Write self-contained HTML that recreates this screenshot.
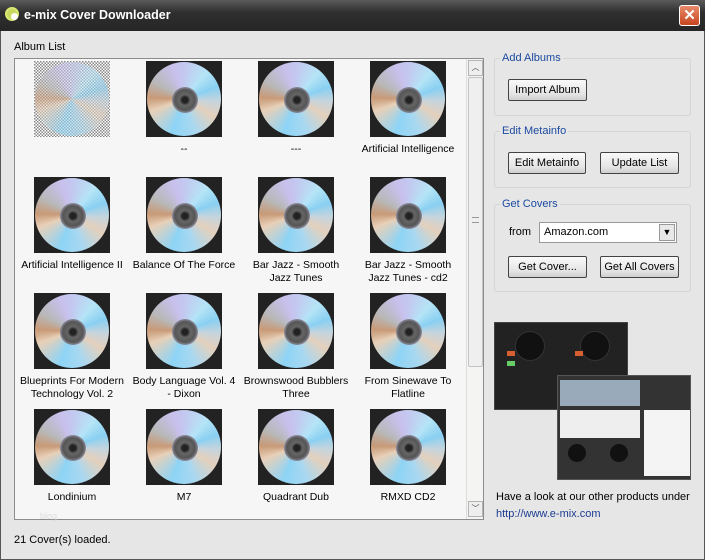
<!DOCTYPE html>
<html><head><style>
*{margin:0;padding:0;box-sizing:border-box}
body{width:705px;height:560px;overflow:hidden;background:#e6e6e6;font-family:Tahoma,"Liberation Sans",sans-serif;font-size:11px;color:#000;position:relative}
.title{position:absolute;left:0;top:0;width:705px;height:31px;background:linear-gradient(#5a5a5a,#2f2f2f 40%,#262626);color:#fff;font-weight:bold;font-size:12.5px}
.title span{position:absolute;left:24px;top:8px}
.logo{position:absolute;left:5px;top:7px;width:14px;height:14px;border-radius:50%;background:#c8d860;border:2px solid #d8e870}
.logo:after{content:"";position:absolute;left:4px;top:4px;width:7px;height:7px;border-radius:50%;background:#fff}
.close{position:absolute;left:679px;top:5px;width:21px;height:21px;background:linear-gradient(#e88a6a,#c8451f);border:1px solid #fff;border-radius:3px;color:#fff;font-size:15px;text-align:center;line-height:19px;font-weight:bold}
.frame{position:absolute;left:0;top:31px;width:705px;height:529px;border:1px solid #555;border-top:none}
.abs{position:absolute}
.list{position:absolute;left:14px;top:58px;width:470px;height:462px;background:#f6f6f6;border:1px solid #8c8c8c}
.sb{position:absolute;right:0;top:0;width:17px;height:460px;background:#f4f4f2;border-left:1px solid #ddd}
.sbb{position:absolute;left:1px;width:15px;height:16px;border:1px solid #b5b5b5;background:#eee;font-size:8px;text-align:center;line-height:14px;color:#444}
.thumb{position:absolute;left:1px;top:18px;width:15px;height:290px;border:1px solid #c4c4c4;border-radius:2px;background:#efefef}
.item{position:absolute;width:112px;text-align:center;font-size:10.5px;line-height:13px}
.cd{width:76px;height:76px;margin:0 auto;background:#222;position:relative;overflow:hidden}
.disc{position:absolute;left:1px;top:1px;width:74px;height:74px;border-radius:50%;background:conic-gradient(from 0deg,#c4c8f0,#b5e4f6 40deg,#8ad0f2 70deg,#c8d4dc 95deg,#e4d0bc 120deg,#aad8f0 160deg,#8ed4f6 200deg,#e8d0b8 250deg,#c89a78 272deg,#b8b8b8 300deg,#c8c0ec 340deg,#c4c8f0)}
.hub{position:absolute;left:25px;top:25px;width:26px;height:26px;border-radius:50%;background:radial-gradient(#222 15%,#666 30%,#555 55%,#8a8a9a 70%,#444 100%)}
.lbl{margin-top:6px}
.grp{position:absolute;border:1px solid #d5d5d5;border-radius:3px}
.gt{position:absolute;color:#1c4aa0;background:#e6e6e6;padding:0 2px;font-size:11px}
.btn{position:absolute;height:22px;border:1px solid #444;border-radius:2px;background:linear-gradient(#fafafa,#e4e4e4 70%,#cfcfcf);text-align:center;line-height:20px;font-size:11px}
</style></head><body>
<div class="frame"></div>
<div class="title"><div class="logo"></div><span>e-mix Cover Downloader</span><div class="close">✕</div></div>
<div class="abs" style="left:14px;top:41px">Album List</div>
<div class="list">
<div class="sb"><div class="sbb" style="top:1px">︿</div><div class="thumb"></div><div class="abs" style="left:5px;top:158px;width:7px;height:6px;border-top:1px solid #999;border-bottom:1px solid #999"></div><div class="sbb" style="top:442px">﹀</div></div>

<div class="item" style="left:1px;top:2px"><div class="cd" style="background:repeating-conic-gradient(#fff 0 25%,#888 0 50%) 0 0/3px 3px"><div class="disc" style="opacity:.6"></div></div></div>
<div class="item" style="left:113px;top:2px"><div class="cd"><div class="disc"><div class="hub"></div></div></div><div class="lbl">--</div></div>
<div class="item" style="left:225px;top:2px"><div class="cd"><div class="disc"><div class="hub"></div></div></div><div class="lbl">---</div></div>
<div class="item" style="left:337px;top:2px"><div class="cd"><div class="disc"><div class="hub"></div></div></div><div class="lbl">Artificial Intelligence</div></div>

<div class="item" style="left:1px;top:118px"><div class="cd"><div class="disc"><div class="hub"></div></div></div><div class="lbl">Artificial Intelligence II</div></div>
<div class="item" style="left:113px;top:118px"><div class="cd"><div class="disc"><div class="hub"></div></div></div><div class="lbl">Balance Of The Force</div></div>
<div class="item" style="left:225px;top:118px"><div class="cd"><div class="disc"><div class="hub"></div></div></div><div class="lbl">Bar Jazz - Smooth<br>Jazz Tunes</div></div>
<div class="item" style="left:337px;top:118px"><div class="cd"><div class="disc"><div class="hub"></div></div></div><div class="lbl">Bar Jazz - Smooth<br>Jazz Tunes - cd2</div></div>

<div class="item" style="left:1px;top:234px"><div class="cd"><div class="disc"><div class="hub"></div></div></div><div class="lbl">Blueprints For Modern<br>Technology Vol. 2</div></div>
<div class="item" style="left:113px;top:234px"><div class="cd"><div class="disc"><div class="hub"></div></div></div><div class="lbl">Body Language Vol. 4<br>- Dixon</div></div>
<div class="item" style="left:225px;top:234px"><div class="cd"><div class="disc"><div class="hub"></div></div></div><div class="lbl">Brownswood Bubblers<br>Three</div></div>
<div class="item" style="left:337px;top:234px"><div class="cd"><div class="disc"><div class="hub"></div></div></div><div class="lbl">From Sinewave To<br>Flatline</div></div>

<div class="item" style="left:1px;top:350px"><div class="cd"><div class="disc"><div class="hub"></div></div></div><div class="lbl">Londinium</div></div>
<div class="item" style="left:113px;top:350px"><div class="cd"><div class="disc"><div class="hub"></div></div></div><div class="lbl">M7</div></div>
<div class="item" style="left:225px;top:350px"><div class="cd"><div class="disc"><div class="hub"></div></div></div><div class="lbl">Quadrant Dub</div></div>
<div class="item" style="left:337px;top:350px"><div class="cd"><div class="disc"><div class="hub"></div></div></div><div class="lbl">RMXD CD2</div></div>
<div class="abs" style="left:25px;top:452px;color:#ddd;font-size:9px">blog</div>
</div>

<div class="grp" style="left:494px;top:58px;width:197px;height:58px"></div>
<div class="gt" style="left:500px;top:52px">Add Albums</div>
<div class="btn" style="left:508px;top:79px;width:79px">Import Album</div>

<div class="grp" style="left:494px;top:131px;width:197px;height:57px"></div>
<div class="gt" style="left:500px;top:125px">Edit Metainfo</div>
<div class="btn" style="left:508px;top:152px;width:78px">Edit Metainfo</div>
<div class="btn" style="left:600px;top:152px;width:79px">Update List</div>

<div class="grp" style="left:494px;top:204px;width:197px;height:88px"></div>
<div class="gt" style="left:500px;top:198px">Get Covers</div>
<div class="abs" style="left:509px;top:226px;font-size:11px">from</div>
<div class="abs" style="left:539px;top:222px;width:138px;height:21px;background:#fff;border:1px solid #999;padding:3px 0 0 4px;font-size:11px">Amazon.com
<div class="abs" style="right:1px;top:1px;width:16px;height:17px;border:1px solid #999;background:#e8e8e8;text-align:center;font-size:9px;line-height:15px">▼</div></div>
<div class="btn" style="left:508px;top:256px;width:79px">Get Cover...</div>
<div class="btn" style="left:600px;top:256px;width:79px">Get All Covers</div>

<div class="abs" style="left:494px;top:322px;width:134px;height:88px;background:#222;border:1px solid #444">
<div class="abs" style="left:20px;top:8px;width:30px;height:30px;border-radius:50%;background:#111;border:1px solid #333"></div>
<div class="abs" style="left:85px;top:8px;width:30px;height:30px;border-radius:50%;background:#111;border:1px solid #333"></div>
<div class="abs" style="left:12px;top:28px;width:8px;height:5px;background:#d86030"></div>
<div class="abs" style="left:12px;top:38px;width:8px;height:5px;background:#6c6"></div>
<div class="abs" style="left:80px;top:28px;width:8px;height:5px;background:#d86030"></div>
</div>
<div class="abs" style="left:557px;top:375px;width:134px;height:105px;background:#333;border:1px solid #555">
<div class="abs" style="left:2px;top:4px;width:80px;height:26px;background:#9ab"></div>
<div class="abs" style="left:2px;top:34px;width:80px;height:28px;background:#eee"></div>
<div class="abs" style="left:86px;top:34px;width:46px;height:66px;background:#f4f4f4"></div>
<div class="abs" style="left:10px;top:68px;width:18px;height:18px;border-radius:50%;background:#111"></div>
<div class="abs" style="left:52px;top:68px;width:18px;height:18px;border-radius:50%;background:#111"></div>
</div>
<div class="abs" style="left:496px;top:491px;font-size:11px">Have a look at our other products under</div>
<div class="abs" style="left:496px;top:508px;font-size:11px;color:#1c3c90">http://www.e-mix.com</div>
<div class="abs" style="left:14px;top:534px;font-size:11px">21 Cover(s) loaded.</div>
</body></html>
